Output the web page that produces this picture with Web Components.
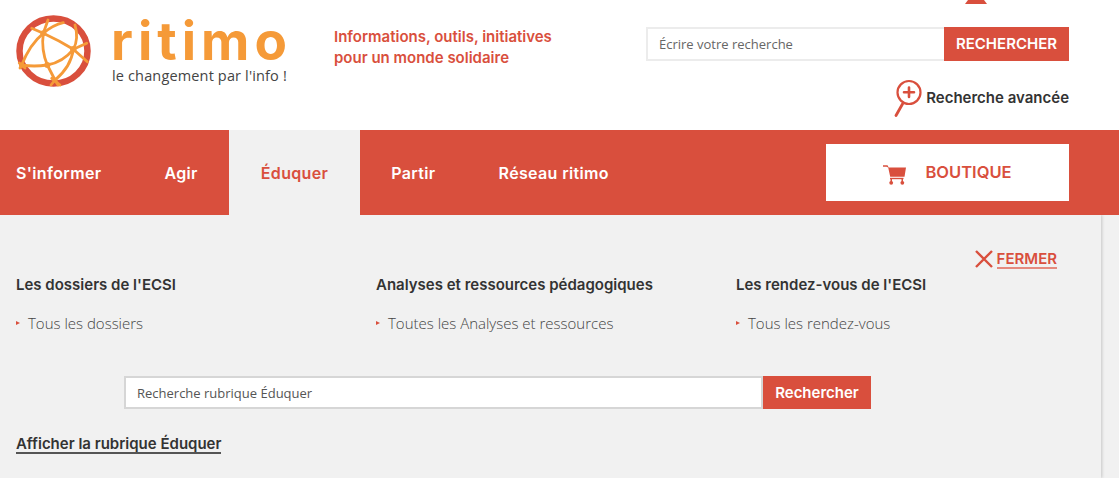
<!DOCTYPE html>
<html lang="fr">
<head>
<meta charset="utf-8">
<title>ritimo</title>
<style>
  html, body { margin: 0; height: 100%; overflow: hidden; }
  body { background: #fff; font-family: "Inter", "Open Sans", sans-serif; }
</style>
</head>
<body>
<ritimo-header></ritimo-header>
<ritimo-nav>
  <nav-item>S'informer</nav-item>
  <nav-item>Agir</nav-item>
  <nav-item active>Éduquer</nav-item>
  <nav-item>Partir</nav-item>
  <nav-item>Réseau ritimo</nav-item>
</ritimo-nav>
<ritimo-panel>
  <panel-column title="Les dossiers de l'ECSI">Tous les dossiers</panel-column>
  <panel-column title="Analyses et ressources pédagogiques">Toutes les Analyses et ressources</panel-column>
  <panel-column title="Les rendez-vous de l'ECSI">Tous les rendez-vous</panel-column>
</ritimo-panel>

<script>
const RED = "#d94f3d";
const ORANGE = "#f59a38";

class RitimoHeader extends HTMLElement {
  constructor() {
    super();
    this.attachShadow({ mode: "open" });
  }

  connectedCallback() {
    this.shadowRoot.innerHTML = `
      <style>
        :host { display: block; height: 130px; position: relative; background: #fff; }
        .wrap { display: flex; height: 100%; padding-left: 16px; box-sizing: border-box; }
        .logo { display: flex; gap: 20px; width: 318px; padding-top: 15px; box-sizing: border-box; }
        .logo svg { width: 76px; height: 72px; flex: none; }
        .brand { display: flex; flex-direction: column; }
        .name { font: 700 53px/48px "Inter", sans-serif; color: ${ORANGE}; letter-spacing: 5px; margin-top: 2px; margin-left: -1px; }
        .motto { font: 400 14.5px/18px "Open Sans", sans-serif; color: #444; letter-spacing: .15px; margin-top: 2px; }
        .tagline { width: 312px; padding-top: 26px; font: 600 15px/21px "Inter", sans-serif; color: ${RED}; }
        .tools { width: 423px; padding-top: 27px; display: flex; flex-direction: column; align-items: flex-end; }
        form { display: flex; width: 100%; height: 34px; }
        .field { flex: 1; box-sizing: border-box; border: 2px solid #ececec; border-right: 0; padding: 0 11px; font: 400 13px/30px "Open Sans", sans-serif; color: #666; }
        .go { width: 125px; background: ${RED}; color: #fff; font: 600 15px/34px "Inter", sans-serif; text-align: center; }
        .advanced { display: flex; align-items: center; gap: 4px; margin-top: 18px; font: 600 15px/20px "Inter", sans-serif; color: #333; }
        .advanced svg { width: 28px; height: 38px; }
        .tab { position: absolute; left: 965px; top: 0; width: 22px; height: 4px; background: ${RED}; clip-path: polygon(3px 0, 19px 0, 22px 100%, 0 100%); }
      </style>
      <div class="wrap">
        <div class="logo">
          <svg viewBox="0 0 76 72" fill="none">
            <ellipse cx="37.5" cy="36" rx="34" ry="32.5" stroke="${RED}" stroke-width="6.5"/>
            <g stroke="${ORANGE}" stroke-width="2.8" stroke-linecap="round" stroke-linejoin="round">
              <path d="M15.7 13.3L27.3 18.3Q44 26 57.3 34.3L71.3 46.7"/>
              <path d="M32 5L27.3 18.3Q25 35 31.3 50L39 65L42 70"/>
              <path d="M47.3 7.7Q37 10 27.3 18.3Q14 29 5.7 50L4 53"/>
              <path d="M59 10Q63 24 57.3 34.3Q47 47 31.3 50Q18 52 5.7 50"/>
              <path d="M70.7 28.3L57.3 34.3Q55 52 39 65L35 70"/>
              <path d="M35.7 63.3L44 70M3.3 48L9 53"/>
            </g>
            <g fill="${ORANGE}">
              <circle cx="27.3" cy="18.3" r="3"/><circle cx="57.3" cy="34.3" r="3.2"/>
              <circle cx="31.3" cy="50" r="3"/><circle cx="39" cy="65" r="2.6"/><circle cx="5.7" cy="50" r="2.6"/>
            </g>
          </svg>
          <div class="brand">
            <span class="name">ritimo</span>
            <span class="motto">le changement par l'info !</span>
          </div>
        </div>
        <div class="tagline">Informations, outils, initiatives<br>pour un monde solidaire</div>
        <div class="tools">
          <form>
            <div class="field">Écrire votre recherche</div>
            <div class="go">RECHERCHER</div>
          </form>
          <div class="advanced">
            <svg viewBox="0 0 28 38" fill="none" stroke="${RED}" stroke-linecap="round">
              <circle cx="15" cy="13.5" r="11.5" stroke-width="2.2"/>
              <path d="M15 8.5v9.5M10 13.2h10" stroke-width="2.6"/>
              <path d="M8.5 25L2 36.5" stroke-width="2.8"/>
            </svg>
            <span>Recherche avancée</span>
          </div>
        </div>
      </div>
      <div class="tab"></div>
    `;
  }
}

class RitimoNav extends HTMLElement {
  constructor() {
    super();
    this.attachShadow({ mode: "open" });
  }

  connectedCallback() {
    this.shadowRoot.innerHTML = `
      <style>
        :host { display: flex; align-items: stretch; height: 85px; background: ${RED}; padding-right: 50px; }
        .items { display: flex; flex: 1; }
        .shop { align-self: center; width: 243px; height: 57px; background: #fff; color: ${RED}; display: flex; align-items: center; justify-content: center; gap: 19px; font: 600 16.5px/1 "Inter", sans-serif; box-sizing: border-box; }
        .shop svg { width: 23px; height: 20px; margin-top: 4px; }
      </style>
      <div class="items"><slot></slot></div>
      <div class="shop">
        <svg viewBox="0 0 23 20" fill="${RED}">
          <path d="M0 0.3h4.5l1.2 2.2H23l-1.500 9.300H7.200L5.200 2.500 3.500 1.700H0z"/>
          <path d="M7 12.800H20.500v1.400H7z"/>
          <path d="M7.500 14h1.500v3h-1.500zM18.500 14h1.500v3h-1.500z"/>
          <circle cx="8.2" cy="17.8" r="1.9"/><circle cx="19.3" cy="17.8" r="1.9"/>
        </svg>
        <span>BOUTIQUE</span>
      </div>
    `;
  }
}

class NavItem extends HTMLElement {
  constructor() {
    super();
    this.attachShadow({ mode: "open" });
  }

  connectedCallback() {
    this.shadowRoot.innerHTML = `
      <style>
        :host { display: flex; align-items: center; padding: 0 31.5px; color: #fff; font: 600 16px/1 "Inter", sans-serif; letter-spacing: .35px; }
        :host(:first-child) { padding-left: 16px; }
        :host([active]) { background: #f1f1f1; color: ${RED}; }
      </style>
      <slot></slot>
    `;
  }
}

class RitimoPanel extends HTMLElement {
  constructor() {
    super();
    this.attachShadow({ mode: "open" });
  }

  connectedCallback() {
    this.shadowRoot.innerHTML = `
      <style>
        :host { display: block; height: 263px; background: #f1f1f1; position: relative; }
        .inner { box-sizing: border-box; width: 1101px; height: 100%; padding: 0 16px; box-shadow: 1px 0 3px rgba(0,0,0,.18); clip-path: inset(0 -5px 0 0); }
        .close { display: flex; justify-content: flex-end; align-items: center; gap: 4px; padding: 33px 28px 0 0; height: 22px; color: ${RED}; font: 600 15px/20px "Inter", sans-serif; }
        .close span { border-bottom: 2px solid #e58a7e; line-height: 17px; }
        .close svg { width: 18px; height: 18px; }
        .cols { display: grid; grid-template-columns: repeat(3, 360px); margin-top: 5px; }
        .search { display: flex; margin: 43px 0 0 108px; height: 33px; }
        .field { box-sizing: border-box; width: 639px; border: 2px solid #d6d6d6; background: #fff; padding: 0 11px; font: 400 13px/31px "Open Sans", sans-serif; color: #555; }
        .go { width: 108px; background: ${RED}; color: #fff; font: 600 15px/33px "Inter", sans-serif; text-align: center; }
        .show { display: inline-block; margin-top: 26px; font: 600 15px/17px "Inter", sans-serif; color: #333; border-bottom: 2px solid #555; }
      </style>
      <div class="inner">
        <div class="close">
          <svg viewBox="0 0 18 18" fill="none" stroke="${RED}" stroke-width="2.4"><path d="M1 1l16 16M17 1L1 17"/></svg>
          <span>FERMER</span>
        </div>
        <div class="cols"><slot></slot></div>
        <div class="search">
          <div class="field">Recherche rubrique Éduquer</div>
          <div class="go">Rechercher</div>
        </div>
        <span class="show">Afficher la rubrique Éduquer</span>
      </div>
    `;
  }
}

class PanelColumn extends HTMLElement {
  constructor() {
    super();
    this.attachShadow({ mode: "open" });
  }

  connectedCallback() {
    this.shadowRoot.innerHTML = `
      <style>
        :host { display: block; }
        h3 { margin: 0; font: 600 15px/20px "Inter", sans-serif; color: #333; }
        .link { display: flex; align-items: center; gap: 8px; margin-top: 18px; font: 300 15px/20px "Open Sans", sans-serif; color: #444; }
        .link i { width: 0; height: 0; border-left: 4px solid ${RED}; border-top: 2.5px solid transparent; border-bottom: 2.5px solid transparent; }
      </style>
      <h3>${this.getAttribute("title")}</h3>
      <div class="link"><i></i><slot></slot></div>
    `;
  }
}

customElements.define("ritimo-header", RitimoHeader);
customElements.define("ritimo-nav", RitimoNav);
customElements.define("nav-item", NavItem);
customElements.define("ritimo-panel", RitimoPanel);
customElements.define("panel-column", PanelColumn);
</script>
</body>
</html>
